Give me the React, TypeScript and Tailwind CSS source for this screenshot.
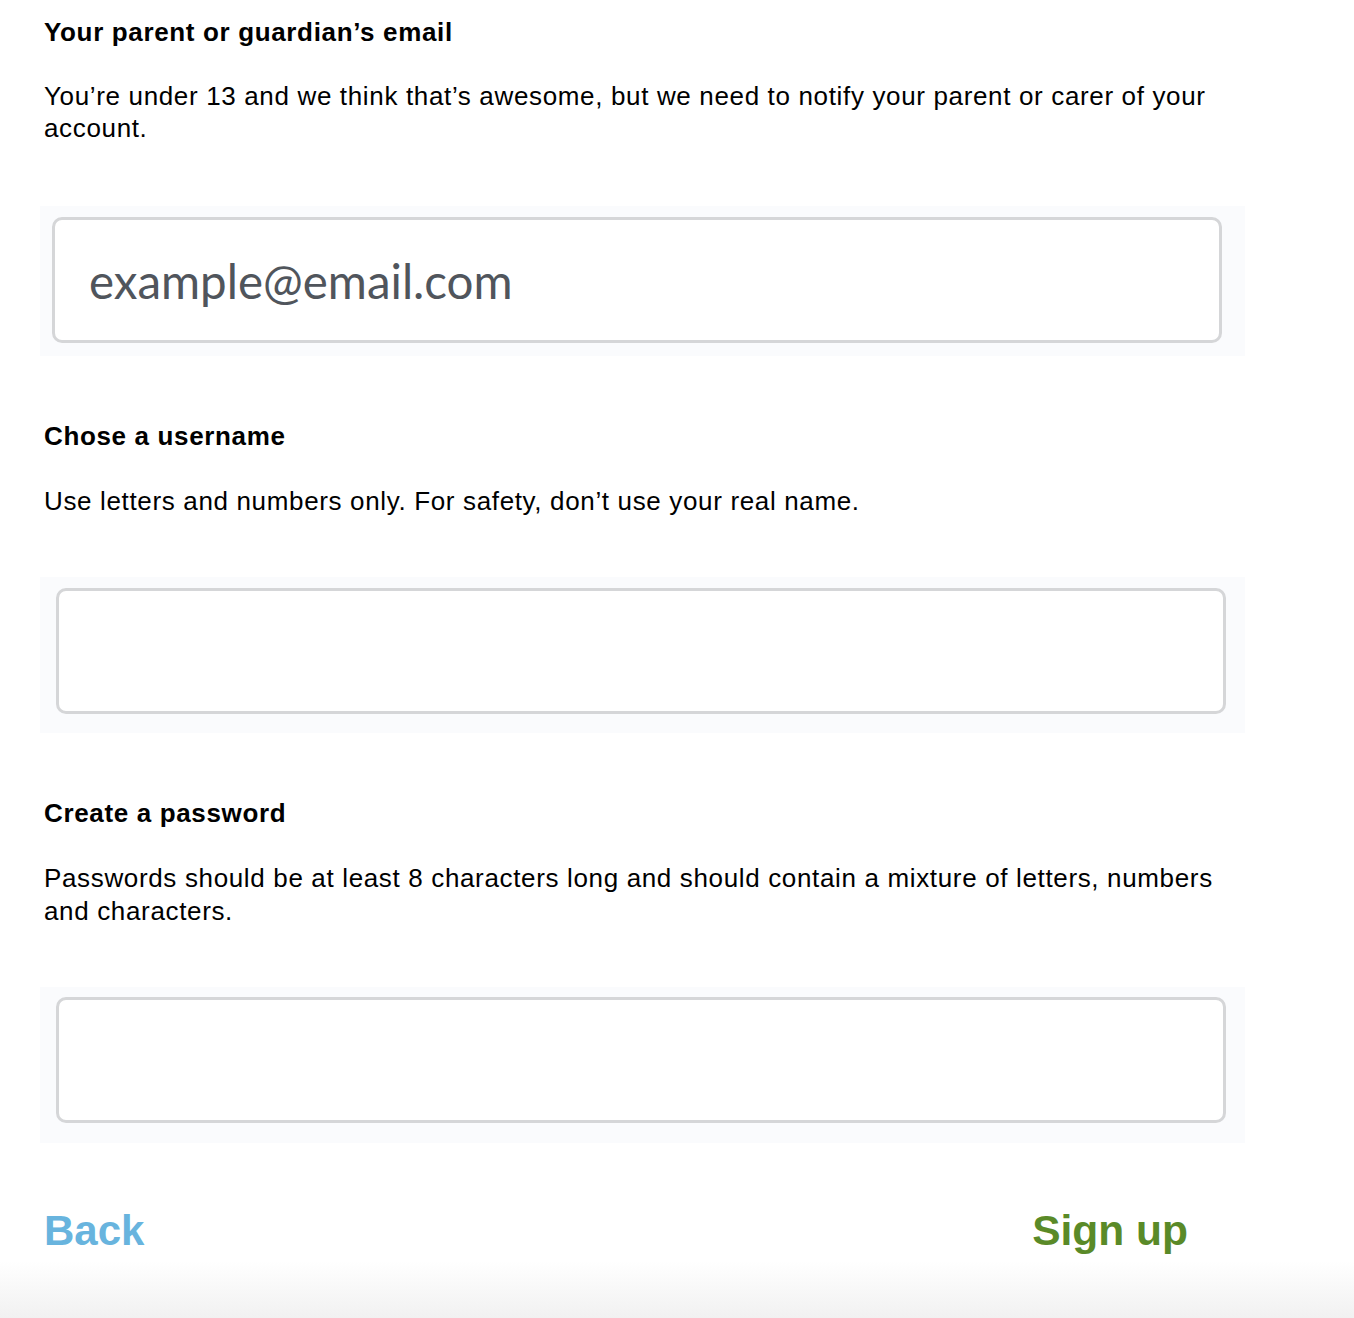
import { useState } from "react";

const bodyFont = "font-['Liberation_Sans',Arial,sans-serif]";

function Field({
  value,
  onChange,
  placeholder,
  type = "text",
  inset,
}: {
  value: string;
  onChange: (v: string) => void;
  placeholder?: string;
  type?: string;
  inset: string;
}) {
  return (
    <div className={`w-[1205px] bg-[#fafbfd] -ml-[4px] ${inset}`}>
      <input
        type={type}
        value={value}
        onChange={(e) => onChange(e.target.value)}
        placeholder={placeholder}
        className="block w-[1170px] h-[126px] rounded-[10px] border-[3px] border-[#d5d6d8] bg-white px-[34px] text-[47.5px] tracking-normal text-[#50555c] placeholder:text-[#50555c] font-['Lato',sans-serif] outline-none"
      />
    </div>
  );
}

export default function App() {
  const [email, setEmail] = useState("");
  const [username, setUsername] = useState("");
  const [password, setPassword] = useState("");

  return (
    <div className={`min-h-[1318px] w-[1354px] bg-white text-black flex flex-col ${bodyFont}`}>
      <div className="pl-[44px] pt-[16px] flex flex-col tracking-[0.65px]">
        {/* Parent email */}
        <h2 className="text-[26px] leading-[32px] font-bold">Your parent or guardian’s email</h2>
        <p className="mt-[32px] text-[26px] leading-[32px] w-[1185px]">
          You’re under 13 and we think that’s awesome, but we need to notify your parent or carer of your account.
        </p>
        <div className="mt-[62px]">
          <Field value={email} onChange={setEmail} placeholder="example@email.com" type="email" inset="pl-[12px] pt-[11px] pb-[13px]" />
        </div>

        {/* Username */}
        <h2 className="mt-[64px] text-[26px] leading-[32px] font-bold">Chose a username</h2>
        <p className="mt-[33px] text-[26px] leading-[32px]">
          Use letters and numbers only. For safety, don’t use your real name.
        </p>
        <div className="mt-[60px]">
          <Field value={username} onChange={setUsername} inset="pl-[16px] pt-[11px] pb-[19px]" />
        </div>

        {/* Password */}
        <h2 className="mt-[64px] text-[26px] leading-[32px] font-bold">Create a password</h2>
        <p className="mt-[33px] text-[26px] leading-[33px] w-[1185px]">
          Passwords should be at least 8 characters long and should contain a mixture of letters, numbers and characters.
        </p>
        <div className="mt-[59px]">
          <Field value={password} onChange={setPassword} type="password" inset="pl-[16px] pt-[10px] pb-[20px]" />
        </div>
      </div>

      {/* Actions */}
      <div className="mt-[63px] flex items-center justify-between pl-[44px] pr-[166px]">
        <button className="text-[42px] leading-[50px] font-bold text-[#68b4de]">Back</button>
        <button className="text-[42.5px] leading-[50px] font-bold text-[#5a8a28]">Sign up</button>
      </div>
      <div className="flex-1 mt-[5px] bg-gradient-to-b from-white to-[#f1f1f1]" />
    </div>
  );
}
